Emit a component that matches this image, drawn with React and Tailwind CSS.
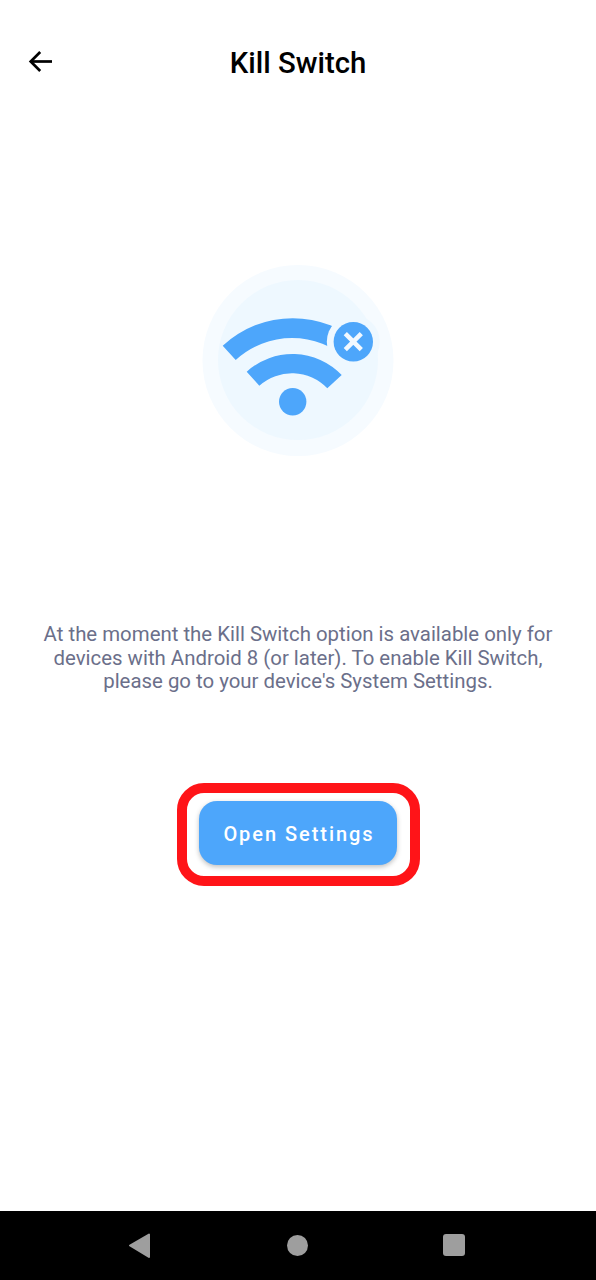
export default function App() {
  return (
    <div className="w-[596px] h-[1280px] bg-white flex flex-col overflow-hidden font-['Roboto',sans-serif]">
      <header className="h-[124px] shrink-0 flex flex-col">
        <div className="relative h-[40px] mt-[42px] flex items-center justify-center">
          <svg className="absolute left-[27px] top-[7px]" width="27" height="27" viewBox="0 0 27 27" fill="none" stroke="#000" strokeWidth="2.7" strokeLinecap="butt" strokeLinejoin="miter">
            <path d="M25 12.5H5" />
            <path d="M13.2 3 3.7 12.5 13.2 22" />
          </svg>
          <h1 className="text-[29.3px] leading-[40px] pt-[1px] font-medium text-black">Kill Switch</h1>
        </div>
      </header>
      <div className="mt-[140px] flex justify-center shrink-0">
        <svg width="192" height="192" viewBox="202 264 192 192">
          <circle cx="298" cy="360.5" r="95.5" fill="#f6fbff" />
          <circle cx="298" cy="360" r="80" fill="#eef8ff" />
          <path d="M222.7 345.7A103 103 0 0 1 362.7 345.7L348.5 360A83.4 83.4 0 0 0 235.7 360Z" fill="#4da6fb" />
          <path d="M246.7 371.7A68 68 0 0 1 341.7 375L327.3 388.3A49 49 0 0 0 259.3 385.7Z" fill="#4da6fb" />
          <circle cx="292.7" cy="401.7" r="13.7" fill="#4da6fb" />
          <circle cx="353.3" cy="341.7" r="26.5" fill="#eef8ff" />
          <circle cx="353.3" cy="341.7" r="19.7" fill="#4da6fb" />
          <path d="M345.3 333.7 361.3 349.7M361.3 333.7 345.3 349.7" stroke="#f2f9ff" strokeWidth="4.5" />
        </svg>
      </div>
      <p className="mt-[167px] px-[20px] text-center text-[20.4px] leading-[23.6px] text-[#6b6f8a]">
        At the moment the Kill Switch option is available only for
        <br />
        devices with Android 8 (or later). To enable Kill Switch,
        <br />
        please go to your device's System Settings.
      </p>
      <div className="mt-[89px] flex justify-center shrink-0">
        <div className="w-[243px] h-[103px] border-[10px] border-[#ff1418] rounded-[27px] bg-white flex justify-center pt-[8px]">
          <button className="w-[198px] h-[64px] pt-[2px] pl-[2px] rounded-[18px] bg-[#4da6fb] text-white text-[20px] font-medium tracking-[1.95px] shadow-[0_2px_5px_rgba(0,0,0,0.25)]">
            Open Settings
          </button>
        </div>
      </div>
      <div className="flex-1" />
      <nav className="h-[69px] shrink-0 bg-black relative">
        <svg className="absolute left-[127px] top-[21px]" width="25" height="28" viewBox="0 0 25 28" fill="#9e9e9e" stroke="#9e9e9e" strokeWidth="2" strokeLinejoin="round">
          <path d="M3 13.5 22 2.5V25Z" />
        </svg>
        <div className="absolute left-[287px] top-[24px] w-[21px] h-[21px] rounded-full bg-[#9e9e9e]" />
        <div className="absolute left-[443px] top-[23px] w-[22px] h-[22px] rounded-[3px] bg-[#9e9e9e]" />
      </nav>
    </div>
  );
}
